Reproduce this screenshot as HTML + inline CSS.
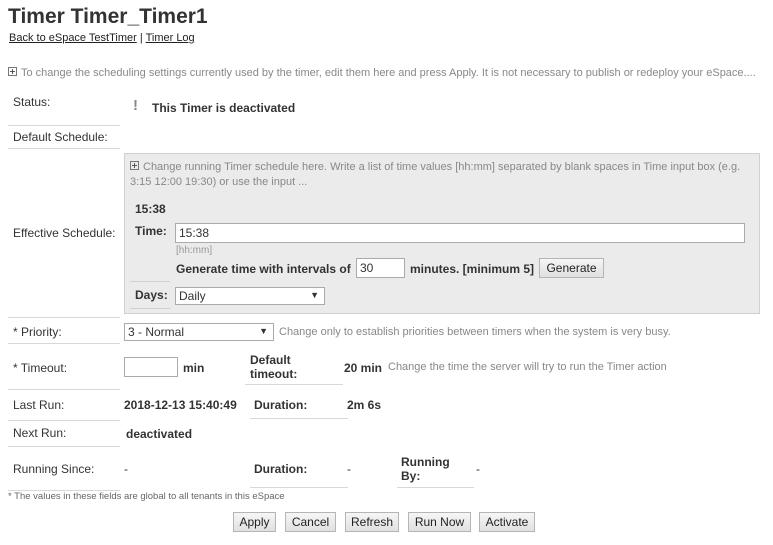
<!DOCTYPE html>
<html><head><meta charset="utf-8"><style>
body{margin:0;width:773px;height:545px;background:#fff;font-family:"Liberation Sans",Arial,sans-serif;font-size:12px;color:#333;position:relative;overflow:hidden}
.a{position:absolute;white-space:nowrap}
.l{position:absolute;height:1px;background:#d8d8d8}
.b{font-weight:bold}
.g{color:#888;font-size:11px}
.inp{position:absolute;border:1px solid #aaa;background:#fff;box-sizing:border-box;font-size:12px;padding:2px 3px}
.btn{position:absolute;top:512px;height:20px;border:1px solid #b5b5b5;background:linear-gradient(#f6f6f6,#e0e0e0);box-sizing:border-box;font-size:12px;text-align:center;line-height:18px;color:#222}
.sel{position:absolute;border:1px solid #aaa;background:#fff;box-sizing:border-box;font-size:12px;padding:1px 3px}
.sel:after{content:"▼";position:absolute;right:5px;top:2px;font-size:9px}
.plus{display:inline-block;width:7px;height:7px;border:1px solid #777;position:relative;margin-right:4px;vertical-align:0}
.plus:before{content:"";position:absolute;left:1px;top:3px;width:5px;height:1px;background:#555}
.plus:after{content:"";position:absolute;left:3px;top:1px;width:1px;height:5px;background:#555}
</style></head><body>
<div class="a b" style="left:8px;top:5px;font-size:21px;color:#333">Timer Timer_Timer1</div>
<div class="a" style="left:9px;top:32px;font-size:11px;color:#222"><u>Back to eSpace TestTimer</u> | <u>Timer Log</u></div>
<div class="a g" style="left:8px;top:67px"><span class="plus"></span>To change the scheduling settings currently used by the timer, edit them here and press Apply. It is not necessary to publish or redeploy your eSpace....</div>

<div class="a" style="left:13px;top:95px">Status:</div>
<div class="a b" style="left:133px;top:97px;color:#888;font-size:15px">!</div>
<div class="a b" style="left:152px;top:101px">This Timer is deactivated</div>
<div class="l" style="left:8px;top:125px;width:112px"></div>
<div class="a" style="left:13px;top:130px">Default Schedule:</div>
<div class="l" style="left:8px;top:148px;width:112px"></div>
<div class="a" style="left:13px;top:226px">Effective Schedule:</div>

<div style="position:absolute;left:124px;top:153px;width:636px;height:161px;background:#ebebeb;border:1px solid #d0d0d0;box-sizing:border-box"></div>
<div class="a g" style="left:130px;top:160px;line-height:15px;white-space:normal;width:620px"><span class="plus"></span>Change running Timer schedule here. Write a list of time values [hh:mm] separated by blank spaces in Time input box (e.g. 3:15 12:00 19:30) or use the input ...</div>
<div class="a b" style="left:135px;top:202px">15:38</div>
<div class="a b" style="left:135px;top:224px">Time:</div>
<div class="inp" style="left:175px;top:223px;width:570px;height:20px">15:38</div>
<div class="a" style="left:176px;top:245px;font-size:10px;color:#999">[hh:mm]</div>
<div class="a b" style="left:176px;top:262px">Generate time with intervals of</div>
<div class="inp" style="left:356px;top:258px;width:49px;height:20px">30</div>
<div class="a b" style="left:410px;top:262px">minutes. [minimum 5]</div>
<div class="btn" style="left:539px;top:258px;width:65px">Generate</div>
<div class="l" style="left:130px;top:281px;width:40px;background:#d0d0d0"></div>
<div class="a b" style="left:135px;top:288px">Days:</div>
<div class="sel" style="left:175px;top:287px;width:150px;height:18px">Daily</div>
<div class="l" style="left:130px;top:308px;width:40px;background:#d0d0d0"></div>
<div class="l" style="left:8px;top:317px;width:112px"></div>

<div class="a" style="left:13px;top:325px">* Priority:</div>
<div class="sel" style="left:124px;top:323px;width:150px;height:18px">3 - Normal</div>
<div class="a g" style="left:279px;top:326px">Change only to establish priorities between timers when the system is very busy.</div>
<div class="l" style="left:8px;top:343px;width:112px"></div>

<div class="a" style="left:13px;top:361px">* Timeout:</div>
<div class="inp" style="left:124px;top:357px;width:54px;height:20px"></div>
<div class="a b" style="left:183px;top:361px">min</div>
<div class="a b" style="left:250px;top:353px;line-height:14px">Default<br>timeout:</div>
<div class="l" style="left:245px;top:384px;width:98px"></div>
<div class="a b" style="left:344px;top:361px">20 min</div>
<div class="a g" style="left:388px;top:361px">Change the time the server will try to run the Timer action</div>
<div class="l" style="left:8px;top:389px;width:112px"></div>

<div class="a" style="left:13px;top:398px">Last Run:</div>
<div class="a b" style="left:124px;top:398px">2018-12-13 15:40:49</div>
<div class="a b" style="left:254px;top:398px">Duration:</div>
<div class="l" style="left:250px;top:418px;width:98px"></div>
<div class="a b" style="left:347px;top:398px">2m 6s</div>
<div class="l" style="left:8px;top:420px;width:112px"></div>

<div class="a" style="left:13px;top:426px">Next Run:</div>
<div class="a b" style="left:126px;top:427px">deactivated</div>
<div class="l" style="left:8px;top:446px;width:112px"></div>

<div class="a" style="left:13px;top:462px">Running Since:</div>
<div class="a" style="left:124px;top:462px">-</div>
<div class="a b" style="left:254px;top:462px">Duration:</div>
<div class="l" style="left:250px;top:487px;width:98px"></div>
<div class="a" style="left:347px;top:462px">-</div>
<div class="a b" style="left:401px;top:455px;line-height:14px">Running<br>By:</div>
<div class="l" style="left:397px;top:487px;width:77px"></div>
<div class="a" style="left:476px;top:462px">-</div>
<div class="l" style="left:8px;top:490px;width:112px"></div>

<div class="a" style="left:8px;top:491px;font-size:9.5px;color:#666">* The values in these fields are global to all tenants in this eSpace</div>

<div class="btn" style="left:233px;width:43px">Apply</div>
<div class="btn" style="left:285px;width:51px">Cancel</div>
<div class="btn" style="left:345px;width:54px">Refresh</div>
<div class="btn" style="left:408px;width:63px">Run Now</div>
<div class="btn" style="left:479px;width:56px">Activate</div>
</body></html>
